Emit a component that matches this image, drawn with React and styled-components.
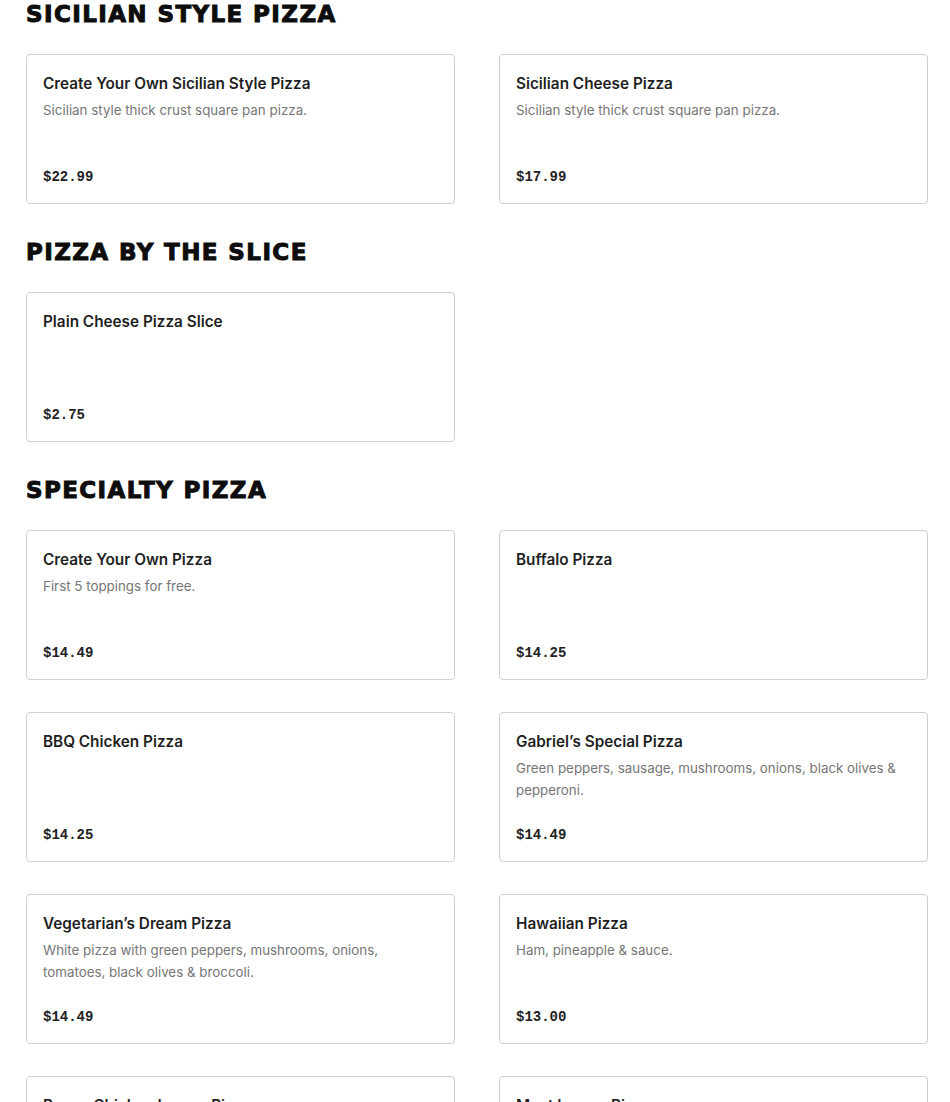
import React from "react";
import styled, { createGlobalStyle } from "styled-components";

const Global = createGlobalStyle`
  html, body { margin: 0; padding: 0; background: #fff; }
  body { font-family: "Inter", "Liberation Sans", sans-serif; color: #222; }
`;

const Page = styled.main`
  padding: 0 22px 0 26px;
  display: flex;
  flex-direction: column;
  gap: 34px;
`;

const Section = styled.section`
  display: flex;
  flex-direction: column;
  gap: 26px;
`;

const Heading = styled.h2`
  margin: 0;
  font-family: "DejaVu Sans", "Liberation Sans", sans-serif;
  font-weight: 700;
  font-size: 23px;
  line-height: 28px;
  letter-spacing: 1.4px;
  color: #0d0d0d;
  -webkit-text-stroke: 1px #0d0d0d;
  text-transform: uppercase;
`;

const Grid = styled.div`
  display: grid;
  grid-template-columns: 429px 429px;
  column-gap: 44px;
  row-gap: 32px;
`;

const Card = styled.article`
  box-sizing: border-box;
  height: 150px;
  border: 1px solid #cfcfcf;
  border-radius: 4px;
  padding: 18px 16px 16px;
  display: flex;
  flex-direction: column;
  background: #fff;
`;

const Title = styled.h3`
  margin: 0;
  font-family: "Inter", "Liberation Sans", sans-serif;
  font-weight: 600;
  font-size: 15.3px;
  line-height: 22px;
  color: #1f1f1f;
`;

const Desc = styled.p`
  margin: 4px 0 0;
  font-family: "Inter", "Liberation Sans", sans-serif;
  font-size: 13.35px;
  line-height: 22px;
  color: #767676;
`;

const Price = styled.div`
  margin-top: auto;
  font-family: "Liberation Mono", "DejaVu Sans Mono", monospace;
  font-weight: 700;
  font-size: 14px;
  line-height: 20px;
  color: #222;
`;

const sections = [
  {
    title: "Sicilian Style Pizza",
    items: [
      { name: "Create Your Own Sicilian Style Pizza", desc: "Sicilian style thick crust square pan pizza.", price: "$22.99" },
      { name: "Sicilian Cheese Pizza", desc: "Sicilian style thick crust square pan pizza.", price: "$17.99" },
    ],
  },
  {
    title: "Pizza by the Slice",
    items: [{ name: "Plain Cheese Pizza Slice", price: "$2.75" }],
  },
  {
    title: "Specialty Pizza",
    items: [
      { name: "Create Your Own Pizza", desc: "First 5 toppings for free.", price: "$14.49" },
      { name: "Buffalo Pizza", price: "$14.25" },
      { name: "BBQ Chicken Pizza", price: "$14.25" },
      { name: "Gabriel’s Special Pizza", desc: "Green peppers, sausage, mushrooms, onions, black olives & pepperoni.", price: "$14.49" },
      { name: "Vegetarian’s Dream Pizza", desc: "White pizza with green peppers, mushrooms, onions, tomatoes, black olives & broccoli.", price: "$14.49" },
      { name: "Hawaiian Pizza", desc: "Ham, pineapple & sauce.", price: "$13.00" },
      { name: "Bacon Chicken Lovers Pizza", price: "$14.49" },
      { name: "Meat Lovers Pizza", price: "$14.49" },
    ],
  },
];

export default function App() {
  return (
    <>
      <Global />
      <Page>
        {sections.map((s) => (
          <Section key={s.title}>
            <Heading>{s.title}</Heading>
            <Grid>
              {s.items.map((it) => (
                <Card key={it.name}>
                  <Title>{it.name}</Title>
                  {it.desc && <Desc>{it.desc}</Desc>}
                  <Price>{it.price}</Price>
                </Card>
              ))}
            </Grid>
          </Section>
        ))}
      </Page>
    </>
  );
}
